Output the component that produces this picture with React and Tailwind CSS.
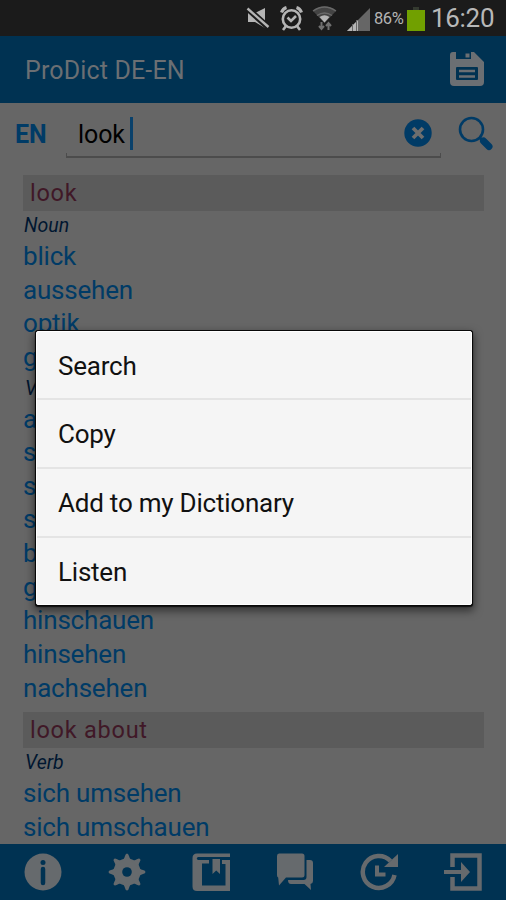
const nounWords = ['blick', 'aussehen', 'optik', 'gesichtsausdruck'];
const verbWords = ['aussehen', 'schauen', 'sehen', 'suchen', 'blicken', 'gucken', 'hinschauen', 'hinsehen', 'nachsehen'];
const aboutWords = ['sich umsehen', 'sich umschauen'];
const actions = ['Search', 'Copy', 'Add to my Dictionary', 'Listen'];

export default function App() {
    return (
        <div className="relative flex h-[900px] w-[506px] flex-col overflow-hidden bg-[#666666] font-['Roboto',sans-serif]">
            <StatusBar />

            <header className="flex h-[67px] shrink-0 items-center justify-between bg-[#003252] pl-[25px] pr-[21px]">
                <h1 className="pt-[3px] text-[25px] tracking-[0.15px] text-[#6b6f73]">ProDict DE-EN</h1>
                <SaveIcon />
            </header>

            <div className="flex h-[72px] shrink-0 items-start">
                <span className="w-[66px] pl-[15px] pt-[14px] text-[25px] font-bold leading-9 text-[#003b66]">EN</span>
                <div className="mt-1 flex h-[51px] w-[375px] flex-col">
                    <div className="flex flex-1 items-center pl-3 pr-[9px]">
                        <span className="pt-2.5 text-[25px] leading-9 tracking-[-0.1px] text-black">look</span>
                        <span className="ml-[5px] mt-1.5 h-[33px] w-[3px] bg-[#0a416b]"></span>
                        <ClearIcon />
                    </div>
                    <div className="h-1.5 border-x border-b-2 border-[#4c4c4c]"></div>
                </div>
                <SearchIcon />
            </div>

            <main className="min-h-0 flex-1 overflow-hidden pl-[23px] pr-[22px]">
                <Heading>look</Heading>
                <PartOfSpeech>Noun</PartOfSpeech>
                <Words items={nounWords} />
                <PartOfSpeech>Verb</PartOfSpeech>
                <Words items={verbWords} />
                <div className="h-[8px]"></div>
                <Heading>look about</Heading>
                <PartOfSpeech>Verb</PartOfSpeech>
                <Words items={aboutWords} />
            </main>

            <Toolbar />

            <div className="absolute left-[36px] top-[331px] w-[436px] overflow-hidden rounded-[2px] border border-white bg-[#f5f5f5] shadow-[0_0_0_1px_#080808,0_1px_1px_1px_#101010,0_4px_9px_2px_rgba(0,0,0,0.5)]">
                {actions.map(a => (
                    <button key={a} className="block h-[69px] w-full border-b-2 border-[#e4e4e4] pl-[21px] pt-0.5 text-left text-[26px] tracking-[-0.22px] text-[#111111] first:h-[68px] last:h-[66px] last:border-b-0">
                        {a}
                    </button>
                ))}
            </div>
        </div>
    );
}

function Heading({ children }) {
    return (
        <h2 className="h-[36px] bg-[#5b5b5b] pl-[7px] text-[23.5px] leading-[37px] tracking-[0.75px] text-[#401827]">{children}</h2>
    );
}

function PartOfSpeech({ children }) {
    return <p className={`h-[28px] text-[19.5px] italic leading-[29px] text-[#001630] ${children === 'Verb' ? 'pl-0.5' : 'pl-px'}`}>{children}</p>;
}

function Words({ items }) {
    return (
        <ul>
            {items.map(w => (
                <li key={w} className="h-[33.65px] pt-px text-[26px] leading-[33.65px] tracking-[-0.2px] text-[#003b66]">{w}</li>
            ))}
        </ul>
    );
}

function StatusBar() {
    return (
        <div className="flex h-[36px] shrink-0 items-center bg-[#1b1b1b] pl-[246px]">
            <svg className="h-[36px] w-[124px] shrink-0" viewBox="246 0 124 36">
                <path d="M248 13h7l10-5v20l-10-6h-7z" fill="#b4b4b4" />
                <path d="M247 8l22 20" stroke="#1b1b1b" strokeWidth="6" />
                <path d="M247.500 8.500l21 18.500" stroke="#b4b4b4" strokeWidth="2.400" />
                <g fill="none" stroke="#b4b4b4" strokeWidth="2.600">
                    <circle cx="291.500" cy="19" r="8.700" />
                    <path d="M287.500 17.500l3.500 3.500 5-5M286 26l-3 4M297 26l3 4" />
                    <path d="M281.500 12.500q1.500-4 5-5M301.500 12.500q-1.500-4-5-5" strokeWidth="3.200" />
                </g>
                <path d="M313 11q11.500-9 23 0l-11.500 12z" fill="#444444" />
                <path d="M313 11q11.500-8 23 0M317 15.500q7.500-5 15 0" fill="none" stroke="#696969" strokeWidth="1.500" />
                <path d="M319.500 17q5-3.500 10 0l-5 5.500z" fill="#b4b4b4" />
                <path d="M321.500 22v7m-2.500-3l2.500 3 2.500-3M328.500 30v-7m-2.500 3l2.500-3 2.500 3" fill="none" stroke="#707070" strokeWidth="2" />
                <path d="M347 31L370 8v23z" fill="#666666" />
                <path d="M347 31l11-11v11z" fill="#b4b4b4" />
                <path d="M352.500 24v7M356.500 20v11" stroke="#666666" strokeWidth="1" />
            </svg>
            <span className="ml-1 w-[33px] pt-0.5 text-[16.5px] tracking-[-0.4px] text-[#b4b4b4]">86%</span>
            <div className="flex w-[18px] flex-col items-center pt-px">
                <div className="h-[3px] w-1.5 bg-[#343a30]"></div>
                <div className="h-[21px] w-[18px] bg-[#71a000]"></div>
            </div>
            <span className="ml-[6px] text-[26px] leading-9 tracking-[-0.3px] text-[#b8b8b8]">16:20</span>
        </div>
    );
}

function SaveIcon() {
    return (
        <svg className="h-[35px] w-[35px]" viewBox="0 0 35 35">
            <path d="M3 0h3v7h15V0h3l10 10v20q0 4-4 4H4q-4 0-4-4V3q0-3 3-3z" fill="#6b6f73" />
            <path d="M15.500 1.500h4v4h-4z" fill="#6b6f73" />
            <rect x="6" y="15" width="22" height="13" rx="1" fill="#003252" />
            <path d="M9 19h16M9 24.500h16" stroke="#6b6f73" strokeWidth="2.500" />
        </svg>
    );
}

function ClearIcon() {
    return (
        <svg className="ml-auto mt-[5px] h-[28px] w-[28px]" viewBox="0 0 28 28">
            <circle cx="14" cy="14" r="13.700" fill="#003b66" />
            <path d="M9 9l10 10M19 9L9 19" stroke="#6e6e6e" strokeWidth="3.800" />
        </svg>
    );
}

function SearchIcon() {
    return (
        <svg className="ml-[17px] mt-[13px] h-[36px] w-[37px]" viewBox="0 0 37 36">
            <circle cx="13.500" cy="13.500" r="11.500" fill="none" stroke="#003b66" strokeWidth="2.600" />
            <path d="M21.500 21.500l4 4" stroke="#003b66" strokeWidth="3" />
            <path d="M25.500 25l5.500 5.500" stroke="#003b66" strokeWidth="7" strokeLinecap="round" />
        </svg>
    );
}

function Toolbar() {
    return (
        <footer className="flex h-[56px] shrink-0 items-center justify-between bg-[#003252] px-[23px]">
            <svg className="h-[40px] w-[40px]" viewBox="0 0 40 40">
                <circle cx="20" cy="20" r="18.500" fill="#666a6d" />
                <path d="M20 17v14" stroke="#003252" strokeWidth="4.500" strokeLinecap="round" />
                <circle cx="20" cy="10.500" r="2.500" fill="#003252" />
            </svg>
            <svg className="h-[40px] w-[40px]" viewBox="0 0 40 40">
                <g fill="#666a6d">
                    <circle cx="20" cy="20" r="13.500" />
                    {[0, 45, 90, 135, 180, 225, 270, 315].map(r => (
                        <path key={r} d="M14 9q3-1 4-5 .6-2.500 2-2.500T22 4q1 4 4 5z" transform={`rotate(${r} 20 20)`} />
                    ))}
                </g>
                <circle cx="20" cy="20" r="4.800" fill="#003252" />
            </svg>
            <svg className="h-[40px] w-[40px]" viewBox="0 0 40 40">
                <path d="M6 1.500h33v3.500H7q-2.500 1.500 0 3h11v3.500h-7v22h23.500v-21.500h-3.500v-4h8v31H6q-4.500 0-4.500-4.500V6Q1.500 1.500 6 1.500z" fill="#666a6d" />
                <path d="M21.500 7h7.500v15l-3.750-3.500L21.500 22z" fill="#666a6d" />
            </svg>
            <svg className="h-[40px] w-[40px]" viewBox="0 0 40 40">
                <path d="M4 1.500h23q2.500 0 2.500 2.500v19q0 2.500-2.500 2.500H11l-7 8-.8-8Q2 25 2 23V4q0-2.500 2-2.500z" fill="#666a6d" />
                <path d="M31.500 8h3.500q3 0 3 3v18q0 2.500-2.500 3l.5 6-6.500-6H16q-3 0-3-4h15.500q3 0 3-3z" fill="#666a6d" />
            </svg>
            <svg className="h-[40px] w-[40px]" viewBox="0 0 40 40">
                <path d="M31.500 9A16 16 0 1 0 35.500 23" fill="none" stroke="#666a6d" strokeWidth="4.500" />
                <path d="M39 2v13H25z" fill="#666a6d" />
                <path d="M18 13.500v9h8.500" fill="none" stroke="#666a6d" strokeWidth="4" />
            </svg>
            <svg className="h-[40px] w-[40px]" viewBox="0 0 40 40">
                <path d="M9.500 15V3.500h27v33h-27V25" fill="none" stroke="#666a6d" strokeWidth="4.500" />
                <path d="M1 18h17v-8l9 10-9 10v-8H1z" fill="#666a6d" />
            </svg>
        </footer>
    );
}
